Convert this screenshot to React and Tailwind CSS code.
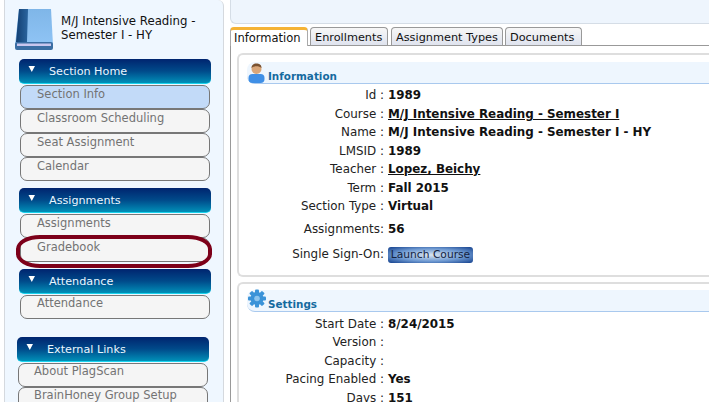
const navHeader = "flex h-[25px] items-start rounded-[5px] border-b border-[#19d4ee] bg-gradient-to-b from-[#00246f] via-[#004a8a] to-[#0090b8] pt-[4px] text-[11.2px] leading-[17px] text-[#eaf6ff]";

function Tri() {
  return (
    <svg width="8" height="8" viewBox="0 0 8 8" className="ml-[9px] mr-[13px] mt-[2px]">
      <path d="M0.5 1 L7 1 L3.8 7 Z" fill="#fff" />
    </svg>
  );
}

function Item({ children, active, indent = "pl-[16px]", top = "pt-[1px]" }) {
  return (
    <div className={`h-[24px] rounded-[7px] border border-[#777] ${indent} ${top} text-[11.5px] leading-[15px] text-[#737373] ${active ? "bg-[#c2daf8]" : "bg-[#f5f5f5]"}`}>
      {children}
    </div>
  );
}

function Book() {
  return (
    <svg width="39" height="41" viewBox="0 0 39 41" className="shrink-0">
      <defs>
        <linearGradient id="bk" x1="0" x2="0" y1="0" y2="1">
          <stop offset="0" stopColor="#7fb6e8" />
          <stop offset="1" stopColor="#8fc4f5" />
        </linearGradient>
        <linearGradient id="sp" x1="0" x2="1" y1="0" y2="0">
          <stop offset="0" stopColor="#123f72" />
          <stop offset="1" stopColor="#2a659f" />
        </linearGradient>
      </defs>
      <path d="M4 0 H36 L38 36 H0 Z" fill="url(#bk)" />
      <path d="M4 0 H13 L12 33 H1 Z" fill="url(#sp)" />
      <rect x="0" y="33" width="38" height="8" rx="2" fill="#3b6ea3" />
      <rect x="2" y="34.5" width="34" height="2.5" fill="#c9c6ee" />
    </svg>
  );
}

function Person() {
  return (
    <svg width="17" height="22" viewBox="0 0 17 22" className="shrink-0">
      <rect x="0.5" y="13" width="16" height="9" rx="4" fill="#3f8fe6" />
      <circle cx="8.5" cy="8" r="5" fill="#d9a679" />
      <path d="M3.5 7 C3 1 14 1 13.5 7 C11 4.5 6 4.5 3.5 7 Z" fill="#7a5230" />
    </svg>
  );
}

function Gear() {
  return (
    <svg width="18" height="19" viewBox="0 0 18 19" className="shrink-0">
      <g fill="#3b93d8">
        <circle cx="9" cy="9.5" r="6.5" />
        <rect x="7" y="0.5" width="4" height="18" rx="1" />
        <rect x="0" y="7.5" width="18" height="4" rx="1" />
        <rect x="7" y="0.5" width="4" height="18" rx="1" transform="rotate(45 9 9.5)" />
        <rect x="7" y="0.5" width="4" height="18" rx="1" transform="rotate(-45 9 9.5)" />
      </g>
      <circle cx="9" cy="9.5" r="2.8" fill="#8cc4ee" />
    </svg>
  );
}

function Row({ label, value, link, h = "h-[18.5px]", colon = " :" }) {
  return (
    <div className={`flex ${h} items-center text-[11.9px] text-[#222]`}>
      <div className="w-[137px] shrink-0 text-right whitespace-pre">{label}{colon}</div>
      <div className={`ml-[4px] whitespace-nowrap font-bold text-[#111] ${link ? "underline" : ""}`}>{value}</div>
    </div>
  );
}

function SectionTitle({ icon, children }) {
  return (
    <div className="relative flex h-[22px] shrink-0 items-end rounded-bl-[8px] rounded-tl-[8px] border-b border-[#a9c9ee] bg-[#eef6fe] pl-[21px] text-[10.4px] font-bold leading-[14px] text-[#156a9f]">
      <div className="absolute -top-[1px] left-[1px]">{icon}</div>
      {children}
    </div>
  );
}

function Tab({ children, active, cls = "" }) {
  return active ? (
    <div className="relative z-10 -mb-px flex h-[19px] w-[78px] items-center rounded-t-[4px] border-x border-[#aaa] border-t-[3px] border-t-[#f5b335] bg-white pl-[3px] pt-[1px] text-[11.5px] text-[#111]">
      {children}
    </div>
  ) : (
    <div className={`flex h-[18px] items-center whitespace-nowrap rounded-t-[4px] border border-b-0 border-[#999] bg-gradient-to-b from-[#f7f7f7] to-[#dfe3ee] pl-[4px] pt-[3px] text-[11.3px] text-[#111] ${cls}`}>
      {children}
    </div>
  );
}

export default function App() {
  return (
    <div className="flex h-[402px] w-[709px] overflow-hidden bg-white font-['DejaVu_Sans','Liberation_Sans',sans-serif]">
      <aside className="relative ml-[4px] h-[402px] w-[220px] shrink-0 rounded-tr-[6px] border-x border-[#d5d9de] bg-[#eff7ff]">
        <div className="ml-[10px] mt-[9px] flex items-center gap-[7px]">
          <Book />
          <div className="mt-[-4px] text-[11.75px] leading-[14px] text-[#111]">
            M/J Intensive Reading -<br />Semester I - HY
          </div>
        </div>

        <div className="ml-[14px] mt-[9px] w-[192px]">
          <div className={navHeader}><Tri />Section Home</div>
          <div className="mt-[1px] px-[1px]">
            <Item active>Section Info</Item>
            <Item>Classroom Scheduling</Item>
            <Item>Seat Assignment</Item>
            <Item>Calendar</Item>
          </div>

          <div className={`${navHeader} mt-[7px]`}><Tri />Assignments</div>
          <div className="mt-[1px] px-[1px]">
            <Item>Assignments</Item>
            <div className="relative">
              <Item>Gradebook</Item>
              <div className="absolute -left-[4px] -right-[2px] -top-[3px] h-[33px] rounded-[24px/14px] border-[4px] border-[#7d0019]" />
            </div>
          </div>

          <div className={`${navHeader} mt-[7px]`}><Tri />Attendance</div>
          <div className="mt-[1px] px-[1px]">
            <Item top="pt-0">Attendance</Item>
          </div>
        </div>

        <div className="ml-[12px] mt-[18px] w-[192px]">
          <div className={navHeader}><Tri />External Links</div>
          <div className="mt-[1px] px-[1px]">
            <Item indent="pl-[15px]" top="pt-0">About PlagScan</Item>
            <Item indent="pl-[15px]" top="pt-0">BrainHoney Group Setup</Item>
          </div>
        </div>
      </aside>

      <main className="ml-[6px] flex h-[402px] min-w-0 flex-1 flex-col overflow-hidden">
        <div className="h-[24px] shrink-0 rounded-bl-[6px] border-b border-l border-[#d5dde6] bg-[#eef5fd]" />
        <div className="mt-[3px] flex h-[19px] shrink-0 items-end gap-[2px] border-b border-[#999]">
          <Tab active>Information</Tab>
          <Tab cls="w-[78px]">Enrollments</Tab>
          <Tab cls="ml-[1px] w-[112px]">Assignment Types</Tab>
          <Tab cls="w-[77px]">Documents</Tab>
        </div>
        <div className="flex-1 border-l border-[#999] pl-[6px] pt-[7px]">
          <section className="h-[224px] rounded-l-[6px] border-y-[2px] border-l-[2px] border-[#dedede] pl-[8px] pt-[7px]">
            <SectionTitle icon={<Person />}>Information</SectionTitle>
            <div className="mt-[3px]">
              <Row label="Id" value="1989" />
              <Row label="Course" value="M/J Intensive Reading - Semester I" link />
              <Row label="Name" value="M/J Intensive Reading - Semester I - HY" />
              <Row label="LMSID" value="1989" />
              <Row label="Teacher" value="Lopez, Beichy" link />
              <Row label="Term" value="Fall 2015" />
              <Row label="Section Type" value="Virtual" />
              <Row label="Assignments" value="56" colon=":" h="h-[27px]" />
              <div className="flex h-[23px] items-center text-[11.9px] text-[#222]">
                <div className="w-[137px] shrink-0 text-right">Single Sign-On:</div>
                <div className="ml-[4px] flex h-[16px] w-[85px] items-center justify-center rounded-[3px] bg-[radial-gradient(ellipse_at_center,#dbe6f2_0%,#6f9ad2_55%,#123f8c_100%)] text-[10.7px] text-[#14233f]">
                  Launch Course
                </div>
              </div>
            </div>
          </section>
          <section className="mt-[5px] h-[140px] rounded-l-[6px] border-y-[2px] border-l-[2px] border-[#dedede] pl-[8px] pt-[6px]">
            <SectionTitle icon={<Gear />}>Settings</SectionTitle>
            <div className="mt-[4px]">
              <Row label="Start Date" value="8/24/2015" h="h-[18px]" />
              <Row label="Version" value="" />
              <Row label="Capacity" value="" />
              <Row label="Pacing Enabled" value="Yes" />
              <Row label="Days" value="151" />
            </div>
          </section>
        </div>
      </main>
    </div>
  );
}
